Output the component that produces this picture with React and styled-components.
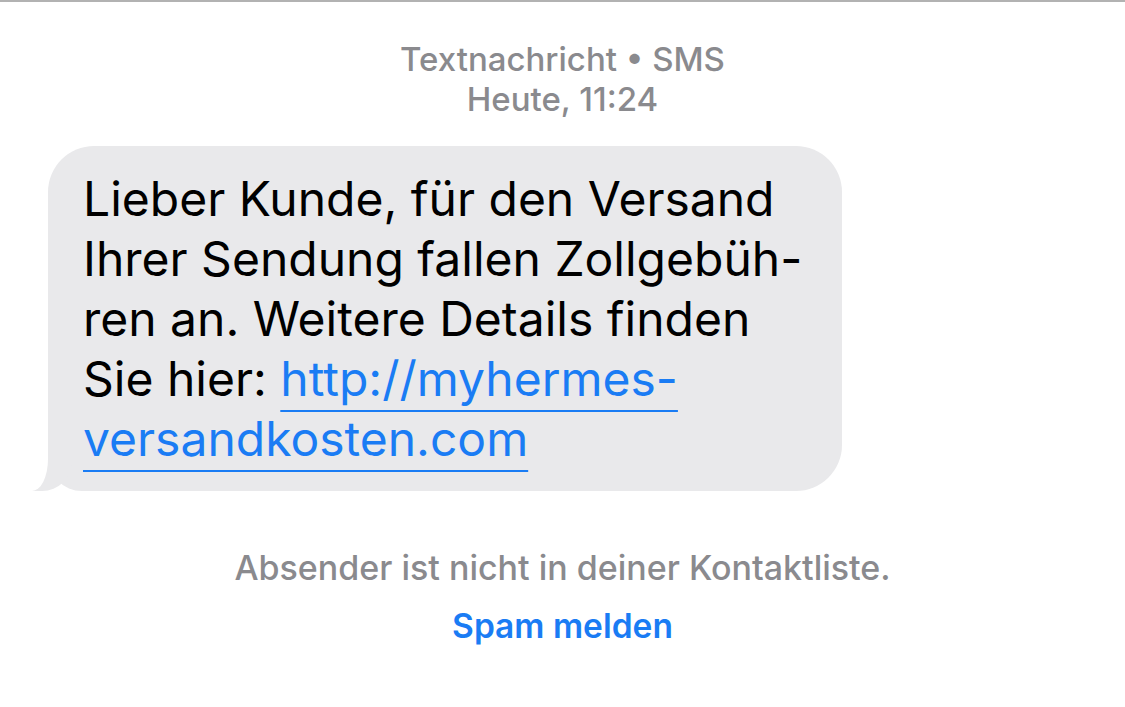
import React from "react";
import styled, { createGlobalStyle } from "styled-components";

const GlobalStyle = createGlobalStyle`
  html, body {
    margin: 0;
    padding: 0;
    background: #ffffff;
  }
  body {
    font-family: Inter, "Noto Sans", "Liberation Sans", sans-serif;
    -webkit-font-smoothing: antialiased;
  }
`;

const Screen = styled.div`
  width: 1125px;
  height: 707px;
  box-sizing: border-box;
  border-top: 2px solid #b2b2b2;
  display: flex;
  flex-direction: column;
  overflow: hidden;
`;

const Header = styled.div`
  padding-top: 37px;
  display: flex;
  flex-direction: column;
  align-items: center;
  color: #8a8a8e;
  font-size: 33px;
  line-height: 40px;
  font-weight: 500;
  white-space: nowrap;
`;

const Thread = styled.div`
  margin-top: 27px;
  padding-left: 48px;
  display: flex;
`;

const Bubble = styled.div`
  position: relative;
  width: 794px;
  box-sizing: border-box;
  padding: 23px 30px 22px 35px;
  background: #e9e9eb;
  border-radius: 46px;
  border-bottom-left-radius: 34px;
  color: #000;
  font-size: 48px;
  line-height: 60px;
  white-space: nowrap;

  &::before {
    content: "";
    position: absolute;
    left: -16px;
    bottom: 0;
    width: 40px;
    height: 40px;
    background: #e9e9eb;
    border-bottom-right-radius: 30px;
  }

  &::after {
    content: "";
    position: absolute;
    left: -22px;
    bottom: 0;
    width: 22px;
    height: 42px;
    background: #ffffff;
    border-bottom-right-radius: 16px 32px;
  }
`;

const Body = styled.p`
  position: relative;
  z-index: 1;
  margin: 0;
`;

const Link = styled.a`
  color: #1a7cf4;
  text-decoration: underline;
  text-decoration-thickness: 2px;
  text-underline-offset: 14px;
  text-decoration-skip-ink: none;
`;

const Notice = styled.div`
  margin-top: 57px;
  display: flex;
  flex-direction: column;
  align-items: center;
  white-space: nowrap;
`;

const NoticeText = styled.div`
  color: #8a8a8e;
  font-size: 34px;
  line-height: 40px;
  font-weight: 500;
`;

const ReportButton = styled.button`
  margin-top: 18px;
  padding: 0;
  border: 0;
  background: none;
  color: #1a7cf4;
  font-family: inherit;
  font-size: 33.5px;
  line-height: 40px;
  font-weight: 600;
  cursor: pointer;
`;

export default function App() {
  return (
    <>
      <GlobalStyle />
      <Screen>
        <Header>
          <div>Textnachricht • SMS</div>
          <div>Heute, 11:24</div>
        </Header>
        <Thread>
          <Bubble>
            <Body>
              Lieber Kunde, für den Versand
              <br />
              Ihrer Sendung fallen Zollgebüh-
              <br />
              ren an. Weitere Details finden
              <br />
              Sie hier:{" "}
              <Link href="#">
                http://myhermes-
                <br />
                versandkosten.com
              </Link>
            </Body>
          </Bubble>
        </Thread>
        <Notice>
          <NoticeText>Absender ist nicht in deiner Kontaktliste.</NoticeText>
          <ReportButton type="button">Spam melden</ReportButton>
        </Notice>
      </Screen>
    </>
  );
}
